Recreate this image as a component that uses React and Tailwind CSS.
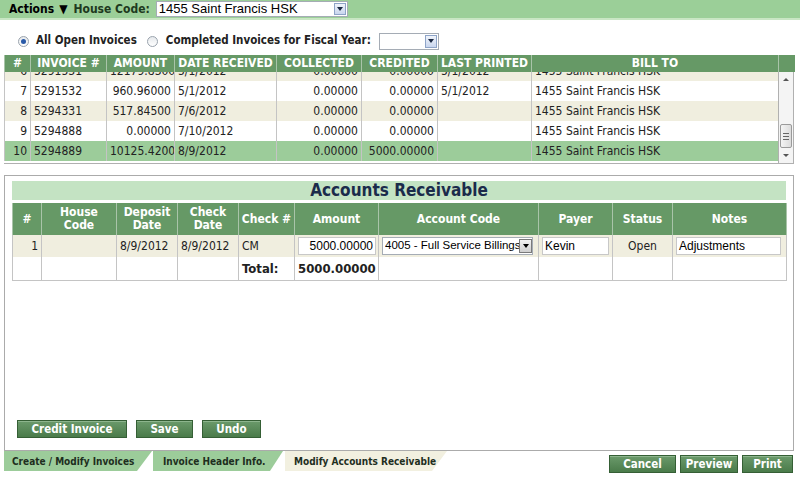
import React from "react";

const invCols = [26, 76, 68, 102, 85, 76, 94, 247];
const invHeads = ["#", "INVOICE #", "AMOUNT", "DATE RECEIVED", "COLLECTED", "CREDITED", "LAST PRINTED", "BILL TO"];
const invAlign = ["text-right", "text-left", "text-right", "text-left", "text-right", "text-right", "text-left", "text-left"];

const invoices = [
  { n: 6, no: "5291531", amt: "12179.83000", date: "5/1/2012", col: "0.00000", cred: "0.00000", printed: "5/1/2012", bg: "bg-[#f0eedf]" },
  { n: 7, no: "5291532", amt: "960.96000", date: "5/1/2012", col: "0.00000", cred: "0.00000", printed: "5/1/2012", bg: "bg-white" },
  { n: 8, no: "5294331", amt: "517.84500", date: "7/6/2012", col: "0.00000", cred: "0.00000", printed: "", bg: "bg-[#f0eedf]" },
  { n: 9, no: "5294888", amt: "0.00000", date: "7/10/2012", col: "0.00000", cred: "0.00000", printed: "", bg: "bg-white" },
  { n: 10, no: "5294889", amt: "10125.42000", date: "8/9/2012", col: "0.00000", cred: "5000.00000", printed: "", bg: "bg-[#9ccc9a]" },
];

const arCols = [29, 75, 61, 61, 56, 84, 160, 74, 60, 114];
const arHeads = ["#", "House\nCode", "Deposit\nDate", "Check\nDate", "Check #", "Amount", "Account Code", "Payer", "Status", "Notes"];

function SelectArrow({ className = "" }) {
  return (
    <span className={`flex items-center justify-center border border-[#8ea4c8] bg-gradient-to-b from-[#f0f4fb] to-[#c9d6ee] ${className}`}>
      <span className="block h-0 w-0 border-x-[3px] border-t-[4px] border-x-transparent border-t-[#1c2a44]" />
    </span>
  );
}

function GreenButton({ children, className = "" }) {
  return (
    <button className={`h-[18px] border border-[#355f35] bg-gradient-to-b from-[#6b9a6b] to-[#4a7b4a] text-[11.5px] font-bold text-white shadow-[inset_0_1px_0_#8db58d] ${className}`}>
      {children}
    </button>
  );
}

function Radio({ checked }) {
  return (
    <span className="flex h-[11px] w-[11px] items-center justify-center rounded-full border border-[#9aa3ad] bg-gradient-to-b from-[#e6e9ec] to-white">
      {checked && <span className="h-[5px] w-[5px] rounded-full bg-[#2a5aa8]" />}
    </span>
  );
}

export default function App() {
  return (
    <div className="relative h-[480px] w-[800px] overflow-hidden bg-white font-['DejaVu_Sans_Condensed','DejaVu_Sans',sans-serif] text-[12px] text-[#222]">
      {/* top bar */}
      <div className="flex h-[20px] items-center border-b-2 border-[#c9e6c4] bg-[#9bcf98]">
        <span className="ml-[9px] text-[12px] font-bold text-black">Actions</span>
        <span className="ml-[5px] text-[12px] text-black">▼</span>
        <span className="ml-[6px] text-[12px] font-bold text-[#1e3a1e]">House Code:</span>
        <div className="ml-[6px] flex h-[16px] w-[192px] items-center border border-[#a5acb5] bg-white pl-[2px] font-['Liberation_Sans',Arial,sans-serif] text-[13px] text-black">
          <span className="flex-1">1455 Saint Francis HSK</span>
          <SelectArrow className="mr-[1px] h-[12px] w-[12px]" />
        </div>
      </div>

      {/* radio row */}
      <div className="mt-[12px] flex h-[18px] items-center pl-[18px] text-[11.5px] font-bold text-[#222]">
        <Radio checked />
        <span className="ml-[7px]">All Open Invoices</span>
        <span className="ml-[10px]"><Radio /></span>
        <span className="ml-[8px]">Completed Invoices for Fiscal Year:</span>
        <div className="ml-[8px] flex h-[17px] w-[60px] items-center justify-end border border-[#a5acb5] bg-white pr-[1px]">
          <SelectArrow className="h-[13px] w-[12px]" />
        </div>
      </div>

      {/* invoice grid */}
      <div className="mx-[4px] mt-[5px] w-[790px] border-b border-[#b0b0b0]">
        <table className="w-[790px] table-fixed border-collapse">
          <colgroup>
            {invCols.map((w, i) => <col key={i} style={{ width: w }} />)}
            <col style={{ width: 16 }} />
          </colgroup>
          <thead>
            <tr className="h-[17px] bg-[#669966]">
              {invHeads.map((h) => (
                <th key={h} className="overflow-hidden border-x border-[#a9c4a9] px-[2px] text-center text-[12px] leading-[15px] font-bold whitespace-nowrap text-white">{h}</th>
              ))}
              <th className="border-l border-[#a9c4a9]" />
            </tr>
          </thead>
        </table>
        <div className="flex h-[91px]">
          <div className="h-full w-[774px] overflow-hidden">
            <table className="-mt-[11px] w-[774px] table-fixed border-collapse">
              <colgroup>
                {invCols.map((w, i) => <col key={i} style={{ width: w }} />)}
              </colgroup>
              <tbody>
                {invoices.map((r) => {
                  const cells = [r.n, r.no, r.amt, r.date, r.col, r.cred, r.printed, "1455 Saint Francis HSK"];
                  return (
                    <tr key={r.n} className={`h-[20px] ${r.bg}`}>
                      {cells.map((c, i) => (
                        <td key={i} className={`overflow-hidden border-x border-[#c4c4c4] px-[3px] text-[12px] whitespace-nowrap text-[#222] ${invAlign[i]}`}>
                          {c}
                        </td>
                      ))}
                    </tr>
                  );
                })}
              </tbody>
            </table>
          </div>
          {/* scrollbar */}
          <div className="flex h-full w-[16px] flex-col border-x border-[#b0b0b0] bg-[#f4f4f4]">
            <div className="flex h-[15px] items-center justify-center">
              <span className="block h-0 w-0 border-x-[3px] border-b-[3px] border-x-transparent border-b-[#555]" />
            </div>
            <div className="flex-1" />
            <div className="mx-[1px] flex h-[24px] flex-col items-center justify-center gap-[2px] rounded-[2px] border border-[#9a9a9a] bg-gradient-to-r from-[#f4f4f4] to-[#dcdcdc]">
              <span className="h-px w-[6px] bg-[#666]" />
              <span className="h-px w-[6px] bg-[#666]" />
              <span className="h-px w-[6px] bg-[#666]" />
            </div>
            <div className="flex h-[15px] items-center justify-center">
              <span className="block h-0 w-0 border-x-[3px] border-t-[3px] border-x-transparent border-t-[#555]" />
            </div>
          </div>
        </div>
      </div>

      {/* accounts receivable panel */}
      <div className="mx-[4px] mt-[11px] flex h-[276px] w-[790px] flex-col border border-[#ababab] px-[7px] pt-[5px] pb-[12px]">
        <div className="flex h-[19px] items-center justify-center bg-[#c4e3c3] text-[17px] leading-none font-bold text-[#1b2b4b]">
          Accounts Receivable
        </div>
        <table className="mt-[3px] w-[774px] table-fixed border-collapse">
          <colgroup>
            {arCols.map((w, i) => <col key={i} style={{ width: w }} />)}
          </colgroup>
          <thead>
            <tr className="h-[32px] bg-[#669966]">
              {arHeads.map((h) => (
                <th key={h} className="border-x border-[#a9c4a9] px-[2px] text-center text-[12px] leading-[13px] font-bold whitespace-pre-line text-white">{h}</th>
              ))}
            </tr>
          </thead>
          <tbody>
            <tr className="h-[22px] bg-[#f0eedf] text-[12px]">
              <td className="border-x border-[#c4c4c4] px-[3px] text-right">1</td>
              <td className="border-x border-[#c4c4c4]" />
              <td className="border-x border-[#c4c4c4] px-[3px]">8/9/2012</td>
              <td className="border-x border-[#c4c4c4] px-[3px]">8/9/2012</td>
              <td className="border-x border-[#c4c4c4] px-[3px]">CM</td>
              <td className="border-x border-[#c4c4c4] px-[3px]">
                <div className="h-[18px] w-[78px] border border-[#c8c8c8] bg-white pr-[2px] text-right font-['Liberation_Sans',Arial,sans-serif] text-[12px] leading-[16px] text-black">5000.00000</div>
              </td>
              <td className="border-x border-[#c4c4c4] px-[3px]">
                <div className="flex h-[18px] w-[151px] items-center border border-[#a5acb5] bg-white pl-[2px] font-['Liberation_Sans',Arial,sans-serif] text-[11.5px] text-black">
                  <span className="flex-1 overflow-hidden whitespace-nowrap">4005 - Full Service Billings</span>
                  <span className="flex h-[14px] w-[13px] shrink-0 items-center justify-center border border-[#7a7a7a] bg-gradient-to-b from-[#f2f2f2] to-[#cfcfcf]">
                    <span className="block h-0 w-0 border-x-[3px] border-t-[4px] border-x-transparent border-t-black" />
                  </span>
                </div>
              </td>
              <td className="border-x border-[#c4c4c4] px-[3px]">
                <div className="h-[18px] w-[67px] border border-[#c8c8c8] bg-white pl-[2px] font-['Liberation_Sans',Arial,sans-serif] text-[12px] leading-[16px] text-black">Kevin</div>
              </td>
              <td className="border-x border-[#c4c4c4] text-center">Open</td>
              <td className="border-x border-[#c4c4c4] px-[3px]">
                <div className="h-[18px] w-[105px] border border-[#c8c8c8] bg-white pl-[2px] font-['Liberation_Sans',Arial,sans-serif] text-[12px] leading-[16px] text-black">Adjustments</div>
              </td>
            </tr>
            <tr className="h-[23px] border-b border-[#c4c4c4] bg-white text-[13px] font-bold">
              <td className="border-x border-[#c4c4c4]" />
              <td className="border-x border-[#c4c4c4]" />
              <td className="border-x border-[#c4c4c4]" />
              <td className="border-x border-[#c4c4c4]" />
              <td className="border-x border-[#c4c4c4] px-[3px]">Total:</td>
              <td className="border-x border-[#c4c4c4] px-[3px] text-right">5000.00000</td>
              <td className="border-x border-[#c4c4c4]" />
              <td className="border-x border-[#c4c4c4]" />
              <td className="border-x border-[#c4c4c4]" />
              <td className="border-x border-[#c4c4c4]" />
            </tr>
          </tbody>
        </table>
        <div className="mt-auto flex gap-[9px] pl-[5px]">
          <GreenButton className="w-[110px]">Credit Invoice</GreenButton>
          <GreenButton className="w-[57px]">Save</GreenButton>
          <GreenButton className="w-[59px]">Undo</GreenButton>
        </div>
      </div>

      {/* bottom tabs + actions */}
      <div className="flex items-start">
        <div className="ml-[4px] flex h-[20px] text-[10px] font-bold whitespace-nowrap text-[#1e2e1e]">
          <div className="flex h-full w-[148px] items-center bg-[#9ccc9a] pl-[8px] [clip-path:polygon(0_0,100%_0,calc(100%-15px)_100%,0_100%)]">Create / Modify Invoices</div>
          <div className="ml-[1px] flex h-full w-[130px] items-center bg-[#9ccc9a] pl-[10px] [clip-path:polygon(0_0,100%_0,calc(100%-13px)_100%,0_100%)]">Invoice Header Info.</div>
          <div className="ml-[2px] flex h-full w-[162px] items-center bg-[#f2f0e0] pl-[9px] [clip-path:polygon(0_0,100%_0,calc(100%-15px)_100%,0_100%)]">Modify Accounts Receivable</div>
        </div>
        <div className="mt-[4px] ml-auto mr-[7px] flex gap-[4px]">
          <GreenButton className="w-[67px]">Cancel</GreenButton>
          <GreenButton className="w-[58px]">Preview</GreenButton>
          <GreenButton className="w-[51px]">Print</GreenButton>
        </div>
      </div>
    </div>
  );
}
